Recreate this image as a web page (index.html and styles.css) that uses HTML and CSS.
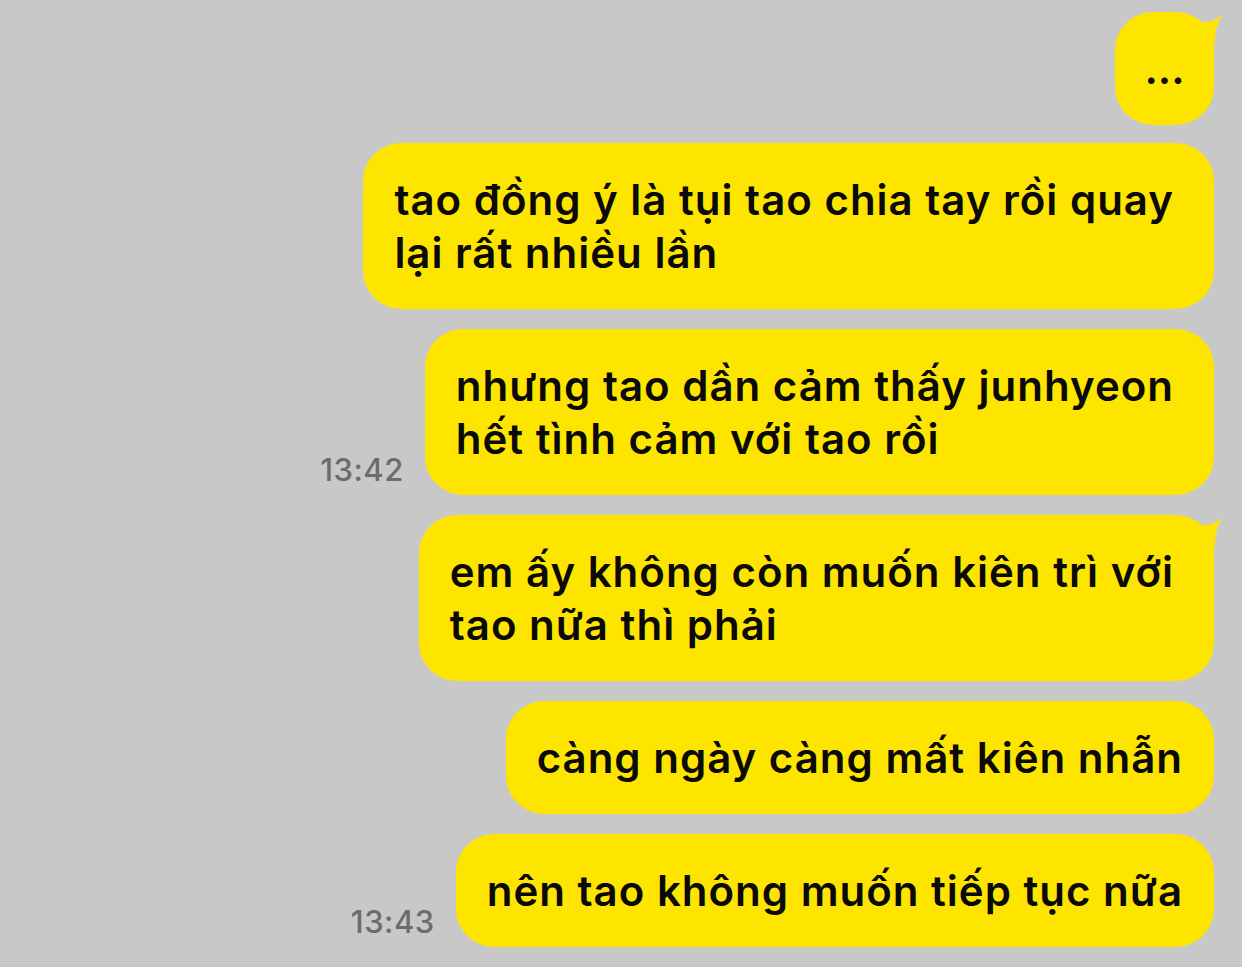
FILE: index.html
```html
<!DOCTYPE html>
<html lang="vi">

<head>
    <meta charset="UTF-8">
    <meta name="viewport" content="width=device-width, initial-scale=1.0">
    <title>Chat</title>
    <link rel="stylesheet" href="styles.css">
</head>

<body>
    <main class="chat">
        <div class="row first">
            <div class="bubble tail dots">...</div>
        </div>
        <div class="row">
            <div class="bubble wrap">tao đồng ý là tụi tao chia tay rồi quay<br>lại rất nhiều lần</div>
        </div>
        <div class="row">
            <span class="time">13:42</span>
            <div class="bubble wrap">nhưng tao dần cảm thấy junhyeon<br>hết tình cảm với tao rồi</div>
        </div>
        <div class="row">
            <div class="bubble wrap tail">em ấy không còn muốn kiên trì với<br>tao nữa thì phải</div>
        </div>
        <div class="row">
            <div class="bubble">càng ngày càng mất kiên nhẫn</div>
        </div>
        <div class="row">
            <span class="time">13:43</span>
            <div class="bubble">nên tao không muốn tiếp tục nữa</div>
        </div>
    </main>
</body>

</html>
```

FILE: styles.css
```css
* {
    box-sizing: border-box;
    margin: 0;
    padding: 0;
}

body {
    background: #c8c8c8;
    font-family: Inter, "Noto Sans", sans-serif;
    width: 1242px;
    height: 967px;
    overflow: hidden;
}

.chat {
    display: flex;
    flex-direction: column;
    align-items: flex-end;
    gap: 20px;
    padding: 12px 28px 0 0;
}

.row {
    display: flex;
    align-items: flex-end;
    gap: 21px;
}

.row.first {
    margin-bottom: -2px;
}

.bubble {
    position: relative;
    background: #fee500;
    color: #0a0a0a;
    font-size: 42px;
    font-weight: 600;
    line-height: 53px;
    padding: 30px 31px;
    border-radius: 38px;
    letter-spacing: 1px;
}

.bubble.wrap {
    padding-right: 40px;
}

.bubble.tail::after {
    content: "";
    position: absolute;
    top: 2px;
    right: -9px;
    width: 30px;
    height: 30px;
    background: #fee500;
    clip-path: path("M0 6 C10 10 22 8 30 0 C24 8 22 18 22 30 L0 30 Z");
}

.dots {
    width: 99px;
    height: 113px;
    padding: 30px 0;
    text-align: center;
    letter-spacing: 0;
}

.time {
    color: #6c6c6c;
    font-size: 31px;
    font-weight: 500;
    letter-spacing: 0.5px;
    margin-bottom: 7px;
}
```
